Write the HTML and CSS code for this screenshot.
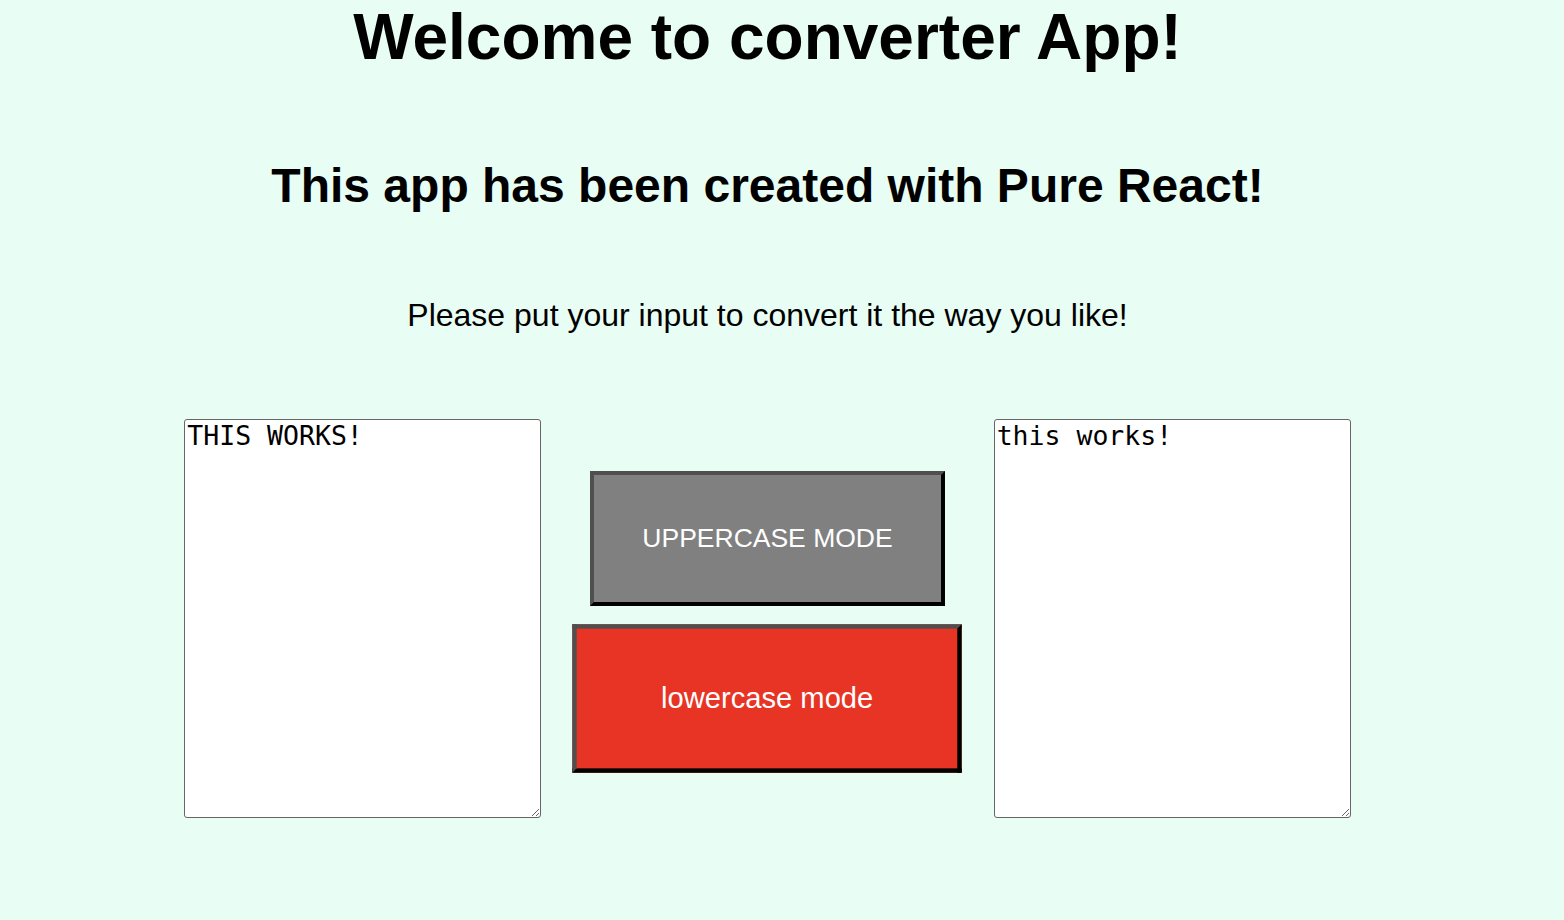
FILE: index.html
```html
<!DOCTYPE html>
<html lang="en">
<head>
<meta charset="utf-8">
<title>Converter App</title>
<link rel="stylesheet" href="styles.css">
</head>
<body>
<div class="app">
  <h1 class="title">Welcome to converter App!</h1>
  <h2 class="subtitle">This app has been created with Pure React!</h2>
  <p class="hint">Please put your input to convert it the way you like!</p>
  <div class="converter">
    <textarea class="box">THIS WORKS!</textarea>
    <div class="modes">
      <button class="mode mode-upper">UPPERCASE MODE</button>
      <button class="mode mode-lower">lowercase mode</button>
    </div>
    <textarea class="box">this works!</textarea>
  </div>
</div>
</body>
</html>
```
FILE: styles.css
```css
html, body {
  margin: 0;
  padding: 0;
  background: #e8fdf3;
}

body {
  font-family: "Liberation Sans", Arial, sans-serif;
  color: #000;
  width: 1564px;
  height: 920px;
  overflow: hidden;
}

.app {
  width: 1535px;
  display: flex;
  flex-direction: column;
  align-items: center;
}

.title {
  margin: 0;
  font-size: 64px;
  font-weight: bold;
  line-height: 74px;
}

.subtitle {
  margin: 84px 0 0;
  font-size: 48px;
  font-weight: bold;
  line-height: 55px;
}

.hint {
  margin: 84px 0 0;
  font-size: 32px;
  line-height: 37px;
}

.converter {
  margin-top: 85px;
  display: flex;
  align-items: center;
  gap: 49px;
}

.box {
  box-sizing: border-box;
  width: 357px;
  height: 399px;
  margin: 0;
  padding: 0 2px 2px;
  border: 1px solid #666;
  border-radius: 3px;
  background: #fff;
  font-family: "DejaVu Sans Mono", "Liberation Mono", monospace;
  font-size: 26.5px;
  line-height: 31px;
  color: #000;
}

.modes {
  display: flex;
  flex-direction: column;
  gap: 25px;
}

.mode {
  margin: 0;
  padding: 48px;
  border: 4px solid;
  border-color: #4f4f4f #000 #000 #4f4f4f;
  font-family: "Liberation Sans", Arial, sans-serif;
  font-size: 26.5px;
  line-height: 31px;
  color: #fff;
  cursor: pointer;
}

.mode-upper {
  background: #808080;
}

.mode-lower {
  background: #e83424;
  transform: scale(1.1);
}
```
